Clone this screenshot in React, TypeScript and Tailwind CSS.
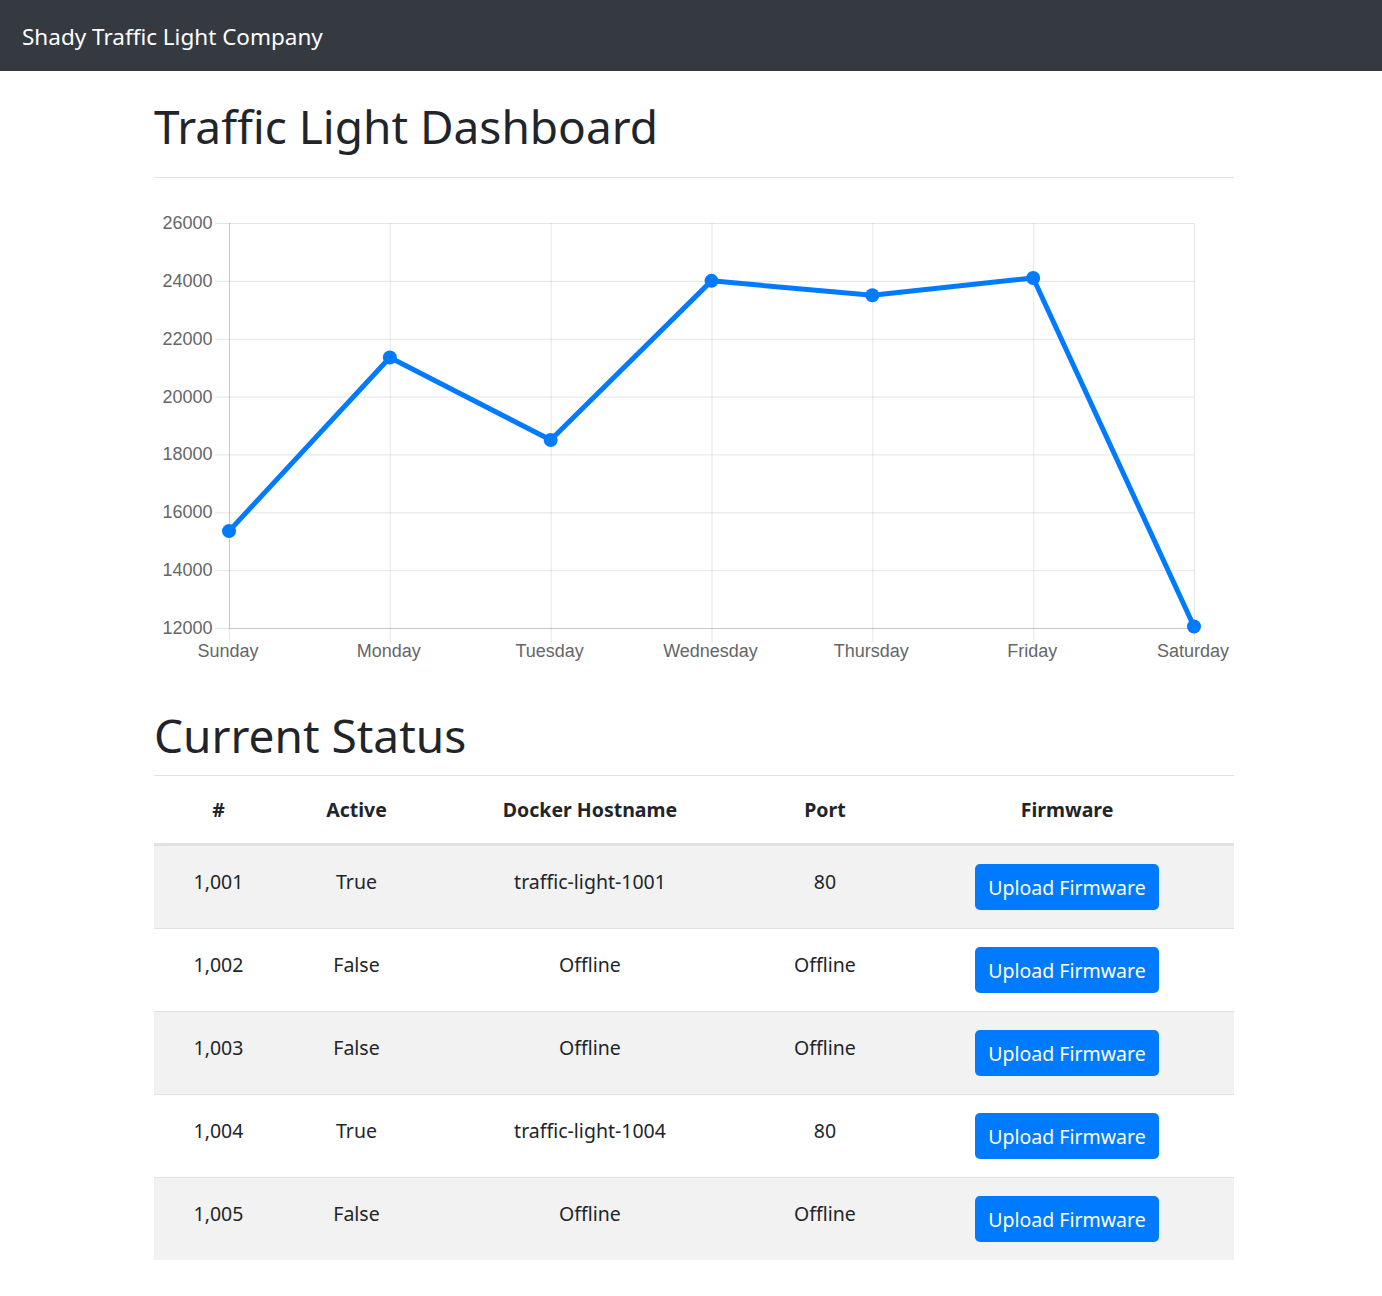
import React from "react";

const days = ["Sunday", "Monday", "Tuesday", "Wednesday", "Thursday", "Friday", "Saturday"];
const values = [15350, 21350, 18500, 24000, 23500, 24100, 12050];
const ticks = [26000, 24000, 22000, 20000, 18000, 16000, 14000, 12000];

const LEFT = 75;
const RIGHT = 1040;
const TOP = 45;
const BOTTOM = 450;
const yOf = (v: number) => BOTTOM - ((v - 12000) / 14000) * (BOTTOM - TOP);
const xOf = (i: number) => LEFT + (i * (RIGHT - LEFT)) / 6;

function Chart() {
  const pts = values.map((v, i) => `${xOf(i)},${yOf(v)}`).join(" ");
  return (
    <svg width={1080} height={492} className="block" style={{ fontFamily: '"Liberation Sans", Arial, sans-serif' }}>
      {ticks.map((t) => (
        <g key={t}>
          <line x1={61} x2={RIGHT} y1={yOf(t) + 0.5} y2={yOf(t) + 0.5} stroke="rgba(0,0,0,0.1)" strokeWidth={1} />
          <text x={58.5} y={yOf(t) + 6} textAnchor="end" fontSize={18} fill="#666">
            {t}
          </text>
        </g>
      ))}
      {days.map((d, i) => (
        <g key={d}>
          <line x1={xOf(i) + 0.5} x2={xOf(i) + 0.5} y1={TOP} y2={464} stroke="rgba(0,0,0,0.1)" strokeWidth={1} />
          <text x={xOf(i) - 1} y={479} textAnchor="middle" fontSize={18} fill="#666">
            {d}
          </text>
        </g>
      ))}
      <line x1={LEFT + 0.5} x2={LEFT + 0.5} y1={TOP} y2={BOTTOM} stroke="rgba(0,0,0,0.12)" strokeWidth={1} />
      <line x1={LEFT} x2={RIGHT} y1={BOTTOM + 0.5} y2={BOTTOM + 0.5} stroke="rgba(0,0,0,0.12)" strokeWidth={1} />
      <polyline points={pts} fill="none" stroke="#007bff" strokeWidth={5} strokeLinejoin="round" />
      {values.map((v, i) => (
        <circle key={i} cx={xOf(i)} cy={yOf(v)} r={7} fill="#007bff" />
      ))}
    </svg>
  );
}

const rows = [
  { id: "1,001", active: "True", host: "traffic-light-1001", port: "80" },
  { id: "1,002", active: "False", host: "Offline", port: "Offline" },
  { id: "1,003", active: "False", host: "Offline", port: "Offline" },
  { id: "1,004", active: "True", host: "traffic-light-1004", port: "80" },
  { id: "1,005", active: "False", host: "Offline", port: "Offline" },
];

const cols = "grid grid-cols-[129px_147px_320px_150px_334px]";

export default function App() {
  return (
    <div
      className="min-h-[1296px] bg-white text-[#212529]"
      style={{ fontFamily: '"Noto Sans", "Open Sans", sans-serif' }}
    >
      <nav className="h-[71px] bg-[#343a40] flex items-center px-[22px] pt-[2px]">
        <span className="text-white text-[22.5px] leading-[27px]">Shady Traffic Light Company</span>
      </nav>

      <main className="ml-[154px] w-[1080px]">
        <div className="pt-[28px] pb-[23px] border-b border-[#dee2e6]">
          <h1 className="text-[46px] leading-[55px] font-normal">Traffic Light Dashboard</h1>
        </div>

        <Chart />

        <h1 className="mt-[38px] mb-[12px] text-[46px] leading-[55px] font-normal">Current Status</h1>

        <div className="border-t border-[#dee2e6] text-[19.5px] leading-[29px]">
          <div className={`${cols} border-b-[3px] border-[#dee2e6] font-bold text-center`}>
            <div className="pt-[19px] pb-[19px]">#</div>
            <div className="pt-[19px] pb-[19px]">Active</div>
            <div className="pt-[19px] pb-[19px]">Docker Hostname</div>
            <div className="pt-[19px] pb-[19px]">Port</div>
            <div className="pt-[19px] pb-[19px]">Firmware</div>
          </div>
          {rows.map((r, i) => (
            <div
              key={r.id}
              className={`${cols} text-center ${i > 0 ? "border-t border-[#dee2e6]" : ""} ${
                i % 2 === 0 ? "bg-[#f2f2f2]" : "bg-white"
              }`}
            >
              <div className="pt-[21px]">{r.id}</div>
              <div className="pt-[21px]">{r.active}</div>
              <div className="pt-[21px]">{r.host}</div>
              <div className="pt-[21px]">{r.port}</div>
              <div className="py-[18px] flex justify-center">
                <button className="h-[46px] w-[184px] rounded-[5px] bg-[#007bff] text-white text-[19.5px] leading-[29px] flex items-center justify-center pt-[1px]">
                  Upload Firmware
                </button>
              </div>
            </div>
          ))}
        </div>
      </main>
    </div>
  );
}
